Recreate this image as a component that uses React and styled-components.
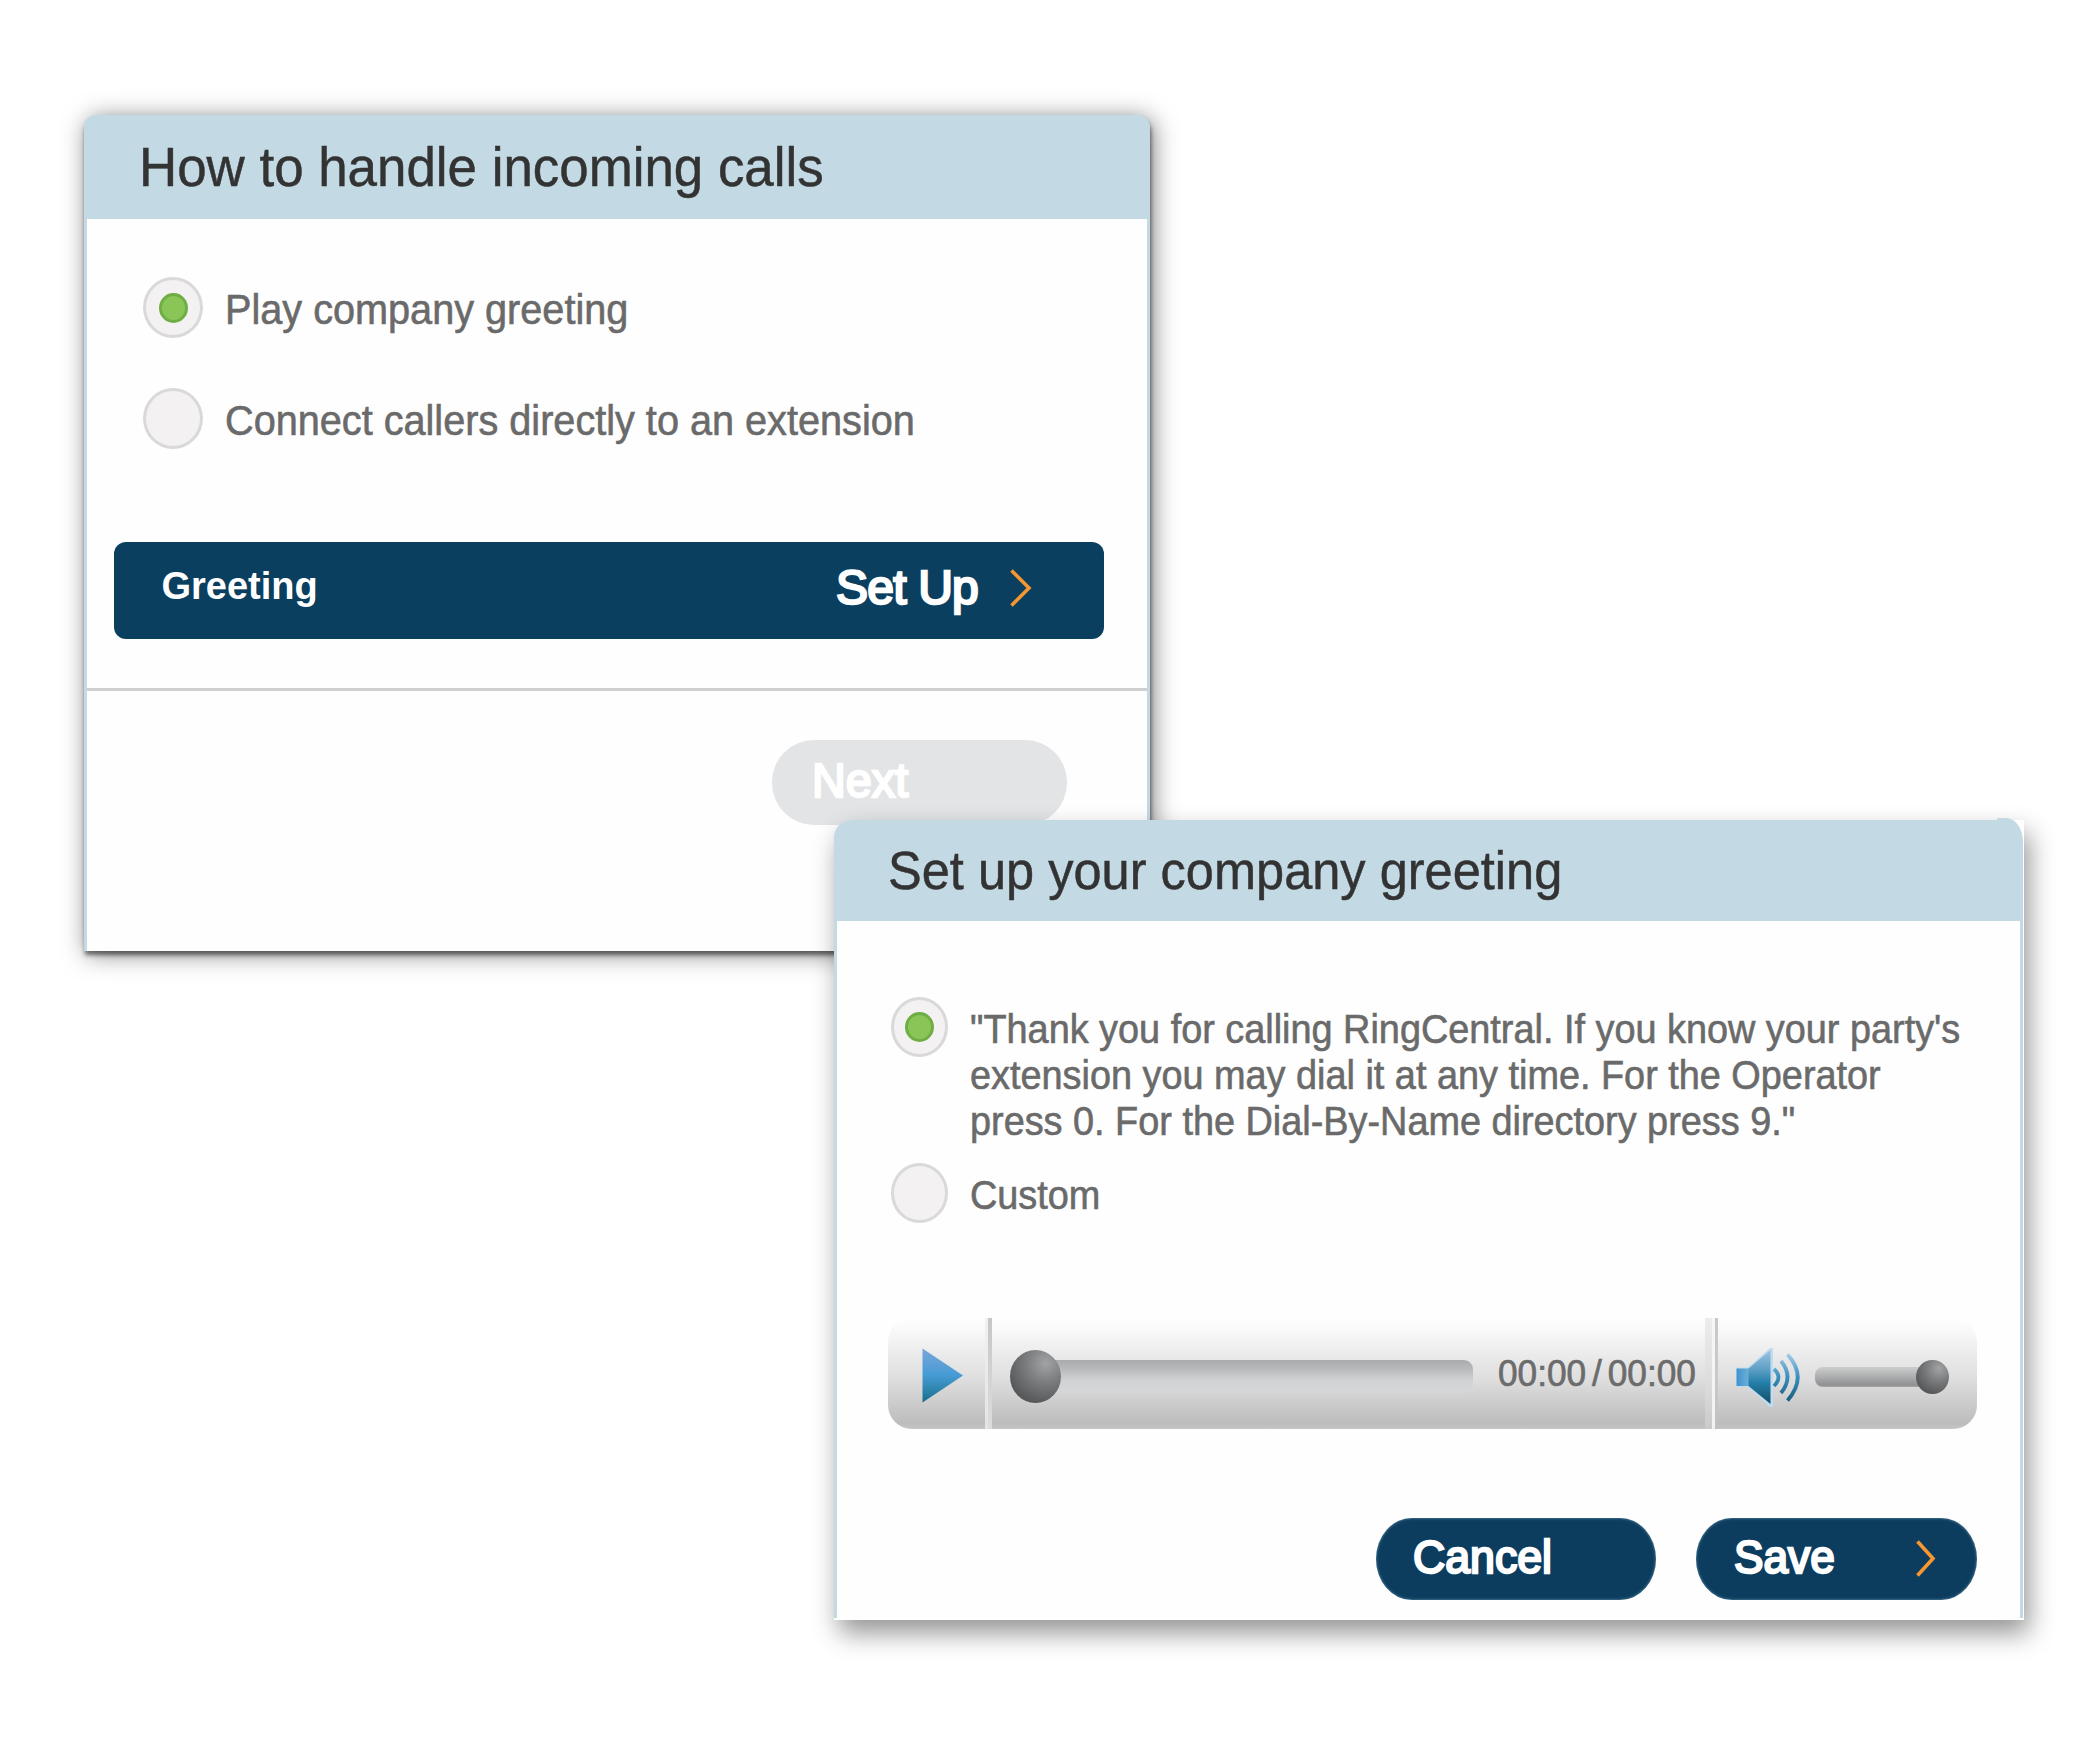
import React, { useState } from "react";
import styled, { createGlobalStyle, css } from "styled-components";

const GlobalStyle = createGlobalStyle`
  * { box-sizing: border-box; }
  body {
    margin: 0;
    background: #fff;
    font-family: "Liberation Sans", Arial, Helvetica, sans-serif;
  }
`;

const Desktop = styled.main`
  position: relative;
  width: 2092px;
  height: 1758px;
  overflow: hidden;
  background: #fff;
`;

const Panel = styled.section`
  position: absolute;
  display: flex;
  flex-direction: column;
  background: #fefefe;
`;

const CallsPanel = styled(Panel)`
  left: 84px;
  top: 115px;
  width: 1066px;
  height: 836px;
  border: solid #c3dae5;
  border-width: 0 3px;
  border-radius: 13px 13px 0 0;
  box-shadow: 1px 4px 4px rgba(0, 0, 0, 0.5), 3px 3px 24px rgba(0, 0, 0, 0.5);
`;

const GreetingPanel = styled(Panel)`
  left: 834px;
  top: 820px;
  width: 1190px;
  height: 800px;
  padding: 0 1.5px 2px 0;
  border-radius: 18px 0 0 0;
  box-shadow: 5px 13px 26px rgba(0, 0, 0, 0.42);
`;

const Frame = styled.div`
  flex: 1;
  display: flex;
  flex-direction: column;
  border: solid #c3dae5;
  border-width: 0 3px;
  border-radius: 18px 26px 0 0;
`;

const Header = styled.header`
  display: flex;
  flex: none;
  height: ${(p) => p.$height}px;
  margin: 0 -3px;
  padding: ${(p) => p.$pad};
  background: #c3dae5;
  border-radius: ${(p) => p.$radius};
`;

const HeaderCap = styled.span`
  width: 26px;
  height: 101px;
  margin: -2px 0 0 auto;
  background: #c3dae5;
  border-radius: 0 17px 0 0 / 0 24px 0 0;
`;

const Title = styled.h1`
  margin: ${(p) => p.$top}px 0 0;
  font-size: ${(p) => p.$size}px;
  line-height: 1;
  font-weight: 400;
  transform: scaleX(${(p) => p.$squeeze});
  transform-origin: left;
  -webkit-text-stroke: 0.5px #333;
  white-space: nowrap;
  color: #333;
`;

const Options = styled.div`
  display: flex;
  flex-direction: column;
  gap: ${(p) => p.$gap}px;
  padding: ${(p) => p.$pad};
`;

const Option = styled.label`
  display: flex;
  align-items: flex-start;
`;

const RadioRing = styled.span`
  flex: none;
  display: grid;
  place-items: center;
  width: ${(p) => p.$w}px;
  height: ${(p) => p.$h}px;
  border: 3px solid #d9d9d9;
  border-radius: 50%;
  background: #f3f1f2;
`;

const RadioDot = styled.span`
  width: 29px;
  height: 30px;
  border: 3px solid #6fae45;
  border-radius: 50%;
  background: #8ac557;
`;

const HiddenInput = styled.input`
  appearance: none;
  width: 0;
  height: 0;
  margin: 0;
`;

const OptionText = styled.span`
  margin: ${(p) => p.$top}px 0 0 ${(p) => p.$left}px;
  font-size: ${(p) => p.$size}px;
  line-height: ${(p) => p.$line}px;
  transform: scaleX(${(p) => p.$squeeze});
  transform-origin: left;
  -webkit-text-stroke: 0.6px #6a6a6a;
  white-space: pre;
  color: #6a6a6a;
`;

const heavy = css`
  line-height: 1;
  letter-spacing: ${(p) => p.$tracking || 0}px;
  color: #fff;
  -webkit-text-stroke: 2.4px #fff;
  white-space: nowrap;
`;

const GreetingBar = styled.button`
  display: flex;
  align-items: flex-start;
  flex: none;
  width: 990px;
  height: 96.5px;
  margin: 93px 0 0 27px;
  padding: 0 72px 0 47.5px;
  border: 0;
  border-radius: 12px;
  background: #0a3f5f;
  font-family: inherit;
`;

const BarName = styled.span`
  margin: 25px auto 0 0;
  font-size: 38px;
  line-height: 1;
  font-weight: 700;
  color: #fff;
`;

const BarAction = styled.span`
  margin: 21.5px 32px 0 0;
  font-size: 48px;
  ${heavy}
`;

const ChevronSlot = styled.span`
  display: flex;
  margin-top: ${(p) => p.$top}px;
`;

const Rule = styled.hr`
  flex: none;
  width: 100%;
  height: 3px;
  margin: 49.5px 0 49px;
  border: 0;
  background: #cfcfcf;
`;

const PillButton = styled.button`
  display: flex;
  align-items: flex-start;
  justify-content: space-between;
  flex: none;
  width: ${(p) => p.$w}px;
  height: ${(p) => p.$h}px;
  padding: 0 40.5px 0 ${(p) => p.$left}px;
  border: 0;
  border-radius: ${(p) => p.$radius};
  background: ${(p) => (p.$muted ? "#e3e4e6" : "#0c3d5f")};
  box-shadow: ${(p) => (p.$muted ? "none" : "inset 0 0 3px rgba(150, 190, 210, 0.7)")};
  font-family: inherit;
`;

const PillText = styled.span`
  margin-top: ${(p) => p.$top}px;
  font-size: ${(p) => p.$size}px;
  transform: scaleX(${(p) => p.$squeeze});
  transform-origin: left;
  ${heavy}
`;

const FooterRow = styled.div`
  display: flex;
  justify-content: flex-end;
  gap: 40px;
  padding-right: ${(p) => p.$right}px;
  margin-top: ${(p) => p.$top}px;
`;

const Player = styled.div`
  display: flex;
  align-items: center;
  flex: none;
  width: 1089px;
  height: 111.5px;
  margin: 95px 0 0 50.5px;
  padding-top: 7px;
  border-radius: 24px;
  background: linear-gradient(#fefefe 0%, #f7f7f7 14%, #ebebeb 33%, #dedede 55%, #cbcbcb 78%, #bcbcbc 95%, #c6c6c6 100%);
`;

const PlayCell = styled.div`
  display: flex;
  width: 97.5px;
  margin-top: -2px;
  padding-left: 34px;
`;

const Divider = styled.span`
  align-self: stretch;
  margin-top: -7px;
  width: 7px;
  background: linear-gradient(#c6c6c9, #d4d4d5 55%, #dcdcdc) right / 4px 100% no-repeat,
    linear-gradient(#f1f1f1, #e4e4e4);
`;

const WideDivider = styled.span`
  align-self: stretch;
  margin: -7px 0 0 9px;
  width: 13px;
  background: linear-gradient(#c9c9cb, #c9c9cb 60%, #c0c0c0) right / 3px 100% no-repeat,
    linear-gradient(#f6f6f6, #f2f2f2) 7px 0 / 3px 100% no-repeat,
    linear-gradient(#ececec, #dcdcdc 60%, #cacaca);
`;

const Seek = styled.div`
  position: relative;
  display: flex;
  align-items: center;
  width: ${(p) => p.$w}px;
  height: 53px;
  margin-left: ${(p) => p.$left}px;
`;

const SeekTrack = styled.span`
  flex: 1;
  height: 33px;
  margin-left: 25px;
  border-radius: 0 9px 9px 0;
  background: linear-gradient(#a9abad, #b9bbbd 30%, #cfd1d3 60%, #d6d7d9);
`;

const VolumeTrack = styled.span`
  flex: 1;
  height: 20px;
  margin-right: 16px;
  border-radius: 8px 0 0 8px;
  background: linear-gradient(#cdcdcd, #aeb0b1 45%, #8f9194 90%, #a5a5a5);
`;

const Knob = styled.span`
  position: absolute;
  ${(p) => p.$side}: 0;
  width: ${(p) => p.$w}px;
  height: ${(p) => p.$h}px;
  border-radius: 50%;
  background: radial-gradient(circle at 70% 25%, #a2a3a5 0%, #7d7e80 35%, #58595b 75%, #505153 100%);
`;

const Time = styled.span`
  width: 198px;
  margin: -5px 0 0 25px;
  font-size: 36.5px;
  line-height: 1;
  transform: scaleX(0.965);
  transform-origin: left;
  word-spacing: -4px;
  -webkit-text-stroke: 0.7px #6c6c6c;
  white-space: nowrap;
  color: #6c6c6c;
`;

const SpeakerSlot = styled.span`
  display: flex;
  margin-left: 18px;
`;

const Chevron = ({ width, height }) => (
  <svg width={width} height={height} viewBox={`0 0 ${width} ${height}`} fill="none">
    <path
      d={`M1.5 1.5 L${width - 3} ${height / 2} L1.5 ${height - 1.5}`}
      stroke="#f8962f"
      strokeWidth="3.6"
    />
  </svg>
);

const PlayIcon = () => (
  <svg width="42" height="55" viewBox="0 0 42 55">
    <defs>
      <linearGradient id="play" x1="0" y1="0" x2="0" y2="1">
        <stop offset="0" stopColor="#7aa6da" />
        <stop offset="0.5" stopColor="#469bd4" />
        <stop offset="0.75" stopColor="#2f86ae" />
        <stop offset="1" stopColor="#156a8c" />
      </linearGradient>
    </defs>
    <path d="M0.5 0.5 L41 27.5 L0.5 54.5 Z" fill="url(#play)" />
  </svg>
);

const SpeakerIcon = () => (
  <svg width="66" height="60" viewBox="0 0 66 60">
    <defs>
      <linearGradient id="cone" x1="0" y1="0" x2="0" y2="1">
        <stop offset="0" stopColor="#9fc3e2" />
        <stop offset="0.35" stopColor="#5fa0c6" />
        <stop offset="0.6" stopColor="#2580aa" />
        <stop offset="1" stopColor="#124c66" />
      </linearGradient>
      <linearGradient id="magnet" x1="0" y1="0" x2="1" y2="0">
        <stop offset="0" stopColor="#3f93cf" />
        <stop offset="1" stopColor="#6fb0d8" />
      </linearGradient>
      <linearGradient id="wave" gradientUnits="userSpaceOnUse" x1="0" y1="6" x2="0" y2="54">
        <stop offset="0" stopColor="#a9cde6" />
        <stop offset="0.5" stopColor="#3a8fc0" />
        <stop offset="1" stopColor="#175f80" />
      </linearGradient>
    </defs>
    <path d="M0.5 20.5 H12 L34 1 H37 V60 H34 L12 40 H0.5 Z" fill="#bfdcf0" />
    <path d="M0.5 21.5 H13 V39 H0.5 Z" fill="url(#magnet)" />
    <path d="M12.5 21.5 L34.5 3 V57 L12.5 39 Z" fill="url(#cone)" />
    <g fill="none" stroke="url(#wave)" strokeWidth="3.8">
      <path d="M38 22 Q47 30 38 39" />
      <path d="M45 14 Q58 30 45 46" />
      <path d="M51.500 7.500 Q72 30 51.500 53.500" />
    </g>
  </svg>
);

const RadioOption = ({ name, checked, onSelect, ringW, ringH, children, ...text }) => (
  <Option>
    <HiddenInput type="radio" name={name} checked={checked} onChange={onSelect} />
    <RadioRing $w={ringW} $h={ringH}>{checked && <RadioDot />}</RadioRing>
    <OptionText {...text}>{children}</OptionText>
  </Option>
);

const GREETING =
  "\"Thank you for calling RingCentral. If you know your party's\n" +
  "extension you may dial it at any time. For the Operator\n" +
  'press 0. For the Dial-By-Name directory press 9."';

export default function App() {
  const [handling, setHandling] = useState("greeting");
  const [source, setSource] = useState("default");
  const large = { ringW: 60, ringH: 61, $size: 42, $line: 42, $squeeze: 0.944, $top: 11.5, $left: 22 };
  const small = { ringW: 57, ringH: 59.5, $size: 40, $line: 46, $squeeze: 0.946, $top: 8.5, $left: 21.5 };

  return (
    <>
      <GlobalStyle />
      <Desktop>
        <CallsPanel>
          <Header $height={104} $pad="0 0 0 55px" $radius="13px 13px 0 0">
            <Title $size={56} $top={24} $squeeze={0.944}>How to handle incoming calls</Title>
          </Header>
          <Options $gap={50} $pad="58px 0 0 56px">
            <RadioOption name="handling" checked={handling === "greeting"} onSelect={() => setHandling("greeting")} {...large}>
              Play company greeting
            </RadioOption>
            <RadioOption name="handling" checked={handling === "direct"} onSelect={() => setHandling("direct")} {...large}>
              Connect callers directly to an extension
            </RadioOption>
          </Options>
          <GreetingBar>
            <BarName>Greeting</BarName>
            <BarAction $tracking={-0.8}>Set Up</BarAction>
            <ChevronSlot $top={27}><Chevron width={22} height={38} /></ChevronSlot>
          </GreetingBar>
          <Rule />
          <FooterRow $right={80} $top={0}>
            <PillButton $muted $w={295} $h={85} $left={39.5} $radius="42px">
              <PillText $size={48} $top={17} $squeeze={0.975}>Next</PillText>
            </PillButton>
          </FooterRow>
        </CallsPanel>

        <GreetingPanel>
          <Frame>
            <Header $height={101} $pad="0 0 0 53.5px" $radius="18px 26px 0 0">
              <Title $size={54} $top={22.5} $squeeze={0.936}>Set up your company greeting</Title>
              <HeaderCap />
            </Header>
            <Options $gap={19.7} $pad="76px 0 0 54px">
              <RadioOption name="source" checked={source === "default"} onSelect={() => setSource("default")} {...small}>
                {GREETING}
              </RadioOption>
              <RadioOption name="source" checked={source === "custom"} onSelect={() => setSource("custom")} {...small}>
                Custom
              </RadioOption>
            </Options>
            <Player>
              <PlayCell><PlayIcon /></PlayCell>
              <Divider />
              <Seek $w={463} $left={18}>
                <SeekTrack />
                <Knob $side="left" $w={51} $h={53} />
              </Seek>
              <Time>00:00 / 00:00</Time>
              <WideDivider />
              <SpeakerSlot><SpeakerIcon /></SpeakerSlot>
              <Seek $w={134} $left={13}>
                <VolumeTrack />
                <Knob $side="right" $w={33} $h={34.5} />
              </Seek>
            </Player>
            <FooterRow $right={43} $top={88.5}>
              <PillButton $w={280.5} $h={82} $left={37.5} $radius="36px / 41px">
                <PillText $size={47} $top={15.5} $squeeze={0.95}>Cancel</PillText>
              </PillButton>
              <PillButton $w={280.5} $h={82} $left={37.5} $radius="36px / 41px">
                <PillText $size={47} $top={15.5} $squeeze={0.94}>Save</PillText>
                <ChevronSlot $top={22.5}><Chevron width={20} height={37} /></ChevronSlot>
              </PillButton>
            </FooterRow>
          </Frame>
        </GreetingPanel>
      </Desktop>
    </>
  );
}
